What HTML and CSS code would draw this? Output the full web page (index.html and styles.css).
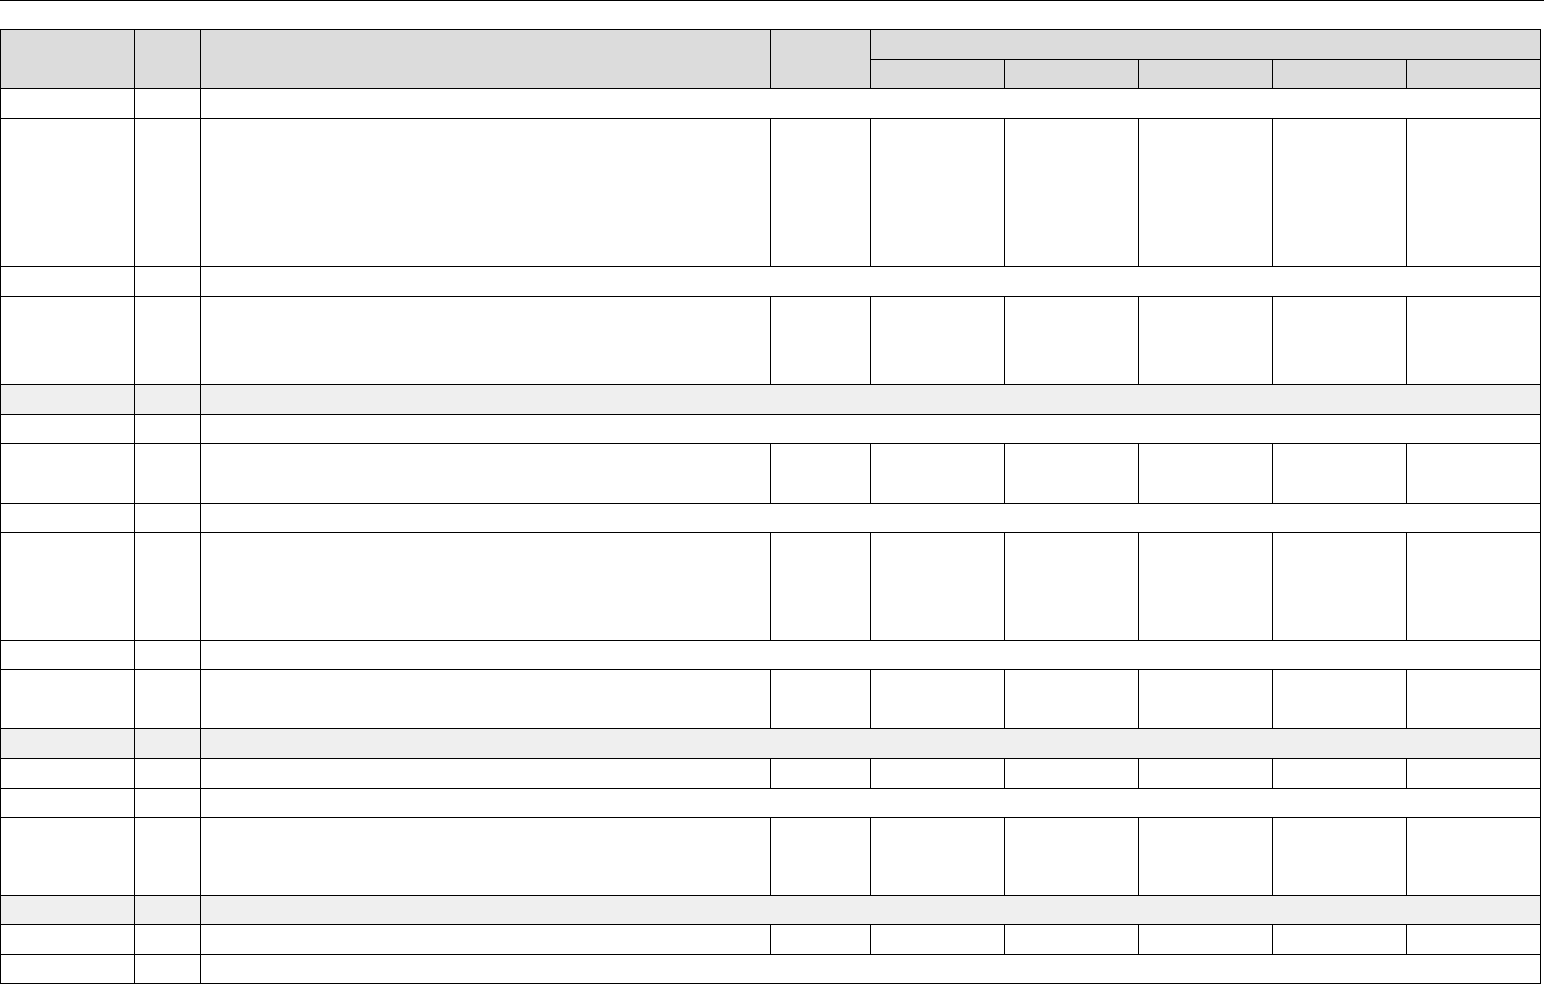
FILE: index.html
```html
<!DOCTYPE html>
<html lang="en">
<head>
<meta charset="utf-8">
<title>Table</title>
<link rel="stylesheet" href="styles.css">
</head>
<body>
<div class="page">
  <div class="rule"></div>
  <table class="grid">
    <colgroup>
      <col class="c-a"><col class="c-b"><col class="c-c"><col class="c-d">
      <col class="c-e"><col class="c-e"><col class="c-e"><col class="c-e"><col class="c-e">
    </colgroup>
    <thead>
      <tr class="h30">
        <th rowspan="2"></th><th rowspan="2"></th><th rowspan="2"></th><th rowspan="2"></th>
        <th colspan="5"></th>
      </tr>
      <tr class="h29">
        <th></th><th></th><th></th><th></th><th></th>
      </tr>
    </thead>
    <tbody>
      <tr class="h30"><td></td><td></td><td colspan="7"></td></tr>
      <tr class="h148"><td></td><td></td><td></td><td></td><td></td><td></td><td></td><td></td><td></td></tr>
      <tr class="h30"><td></td><td></td><td colspan="7"></td></tr>
      <tr class="h88"><td></td><td></td><td></td><td></td><td></td><td></td><td></td><td></td><td></td></tr>
      <tr class="h30 section"><td></td><td></td><td colspan="7"></td></tr>
      <tr class="h29"><td></td><td></td><td colspan="7"></td></tr>
      <tr class="h60"><td></td><td></td><td></td><td></td><td></td><td></td><td></td><td></td><td></td></tr>
      <tr class="h29"><td></td><td></td><td colspan="7"></td></tr>
      <tr class="h108"><td></td><td></td><td></td><td></td><td></td><td></td><td></td><td></td><td></td></tr>
      <tr class="h29"><td></td><td></td><td colspan="7"></td></tr>
      <tr class="h59"><td></td><td></td><td></td><td></td><td></td><td></td><td></td><td></td><td></td></tr>
      <tr class="h30 section"><td></td><td></td><td colspan="7"></td></tr>
      <tr class="h30"><td></td><td></td><td></td><td></td><td></td><td></td><td></td><td></td><td></td></tr>
      <tr class="h29"><td></td><td></td><td colspan="7"></td></tr>
      <tr class="h78"><td></td><td></td><td></td><td></td><td></td><td></td><td></td><td></td><td></td></tr>
      <tr class="h29 section"><td></td><td></td><td colspan="7"></td></tr>
      <tr class="h30"><td></td><td></td><td></td><td></td><td></td><td></td><td></td><td></td><td></td></tr>
      <tr class="h29"><td></td><td></td><td colspan="7"></td></tr>
    </tbody>
  </table>
</div>
</body>
</html>
```

FILE: styles.css
```css
html, body {
  margin: 0;
  padding: 0;
  background: #ffffff;
  font-family: "Liberation Sans", Arial, sans-serif;
  font-size: 13px;
  color: #000;
}

.page {
  display: flex;
  flex-direction: column;
}

.rule {
  height: 1px;
  background: #000;
  width: 100%;
  margin-bottom: 28px;
}

.grid {
  border-collapse: collapse;
  table-layout: fixed;
  width: 1541px;
}

.grid th,
.grid td {
  border: 1px solid #000;
  padding: 0;
}

.grid thead th {
  background: #dcdcdc;
}

.grid .section td {
  background: #efefef;
}

.c-a { width: 134px; }
.c-b { width: 66px; }
.c-c { width: 570px; }
.c-d { width: 100px; }
.c-e { width: 134px; }

.h29 { height: 29px; }
.h30 { height: 30px; }
.h59 { height: 59px; }
.h60 { height: 60px; }
.h78 { height: 78px; }
.h88 { height: 88px; }
.h108 { height: 108px; }
.h148 { height: 148px; }
```
